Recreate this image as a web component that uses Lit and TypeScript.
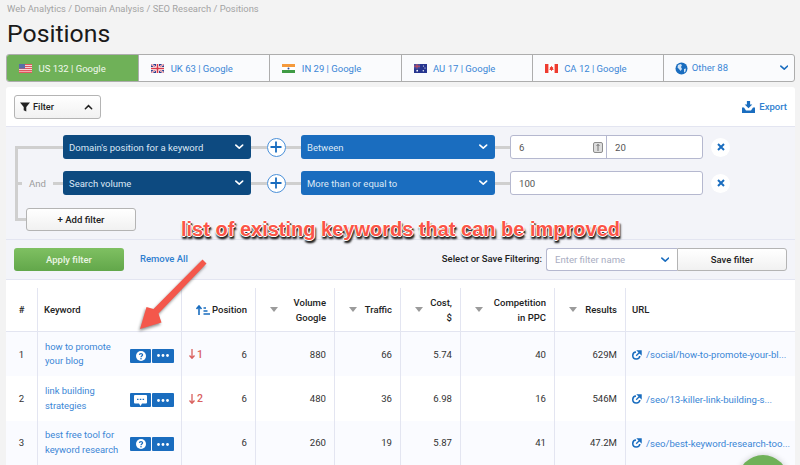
import { LitElement, html, css, svg } from "lit";
import { customElement } from "lit/decorators.js";

const chevron = (c = "#fff") => html`<svg class="chev" width="8.5" height="5.5" viewBox="0 0 10 6"><path d="M1 1l4 3.6L9 1" fill="none" stroke=${c} stroke-width="1.9" stroke-linecap="round" stroke-linejoin="round"/></svg>`;

const flags: Record<string, any> = {
  us: svg`<rect width="13" height="9" fill="#fff"/><path d="M0 .7h13M0 2.7h13M0 4.7h13M0 6.7h13M0 8.4h13" stroke="#e0575f" stroke-width="1.2"/><rect width="6" height="4.6" fill="#5a6ea8"/>`,
  uk: svg`<rect width="13" height="9" fill="#2f3f8f"/><path d="M0 0l13 9M13 0L0 9" stroke="#fff" stroke-width="1.8"/><path d="M0 0l13 9M13 0L0 9" stroke="#d8394a" stroke-width=".7"/><path d="M6.5 0v9M0 4.5h13" stroke="#fff" stroke-width="3"/><path d="M6.5 0v9M0 4.5h13" stroke="#d8394a" stroke-width="1.6"/>`,
  in: svg`<rect width="13" height="3" fill="#f59a3c"/><rect y="3" width="13" height="3" fill="#fff"/><rect y="6" width="13" height="3" fill="#3f9b45"/><circle cx="6.5" cy="4.5" r="1" fill="#2d4a9a"/>`,
  au: svg`<rect width="13" height="9" fill="#26358f"/><rect width="6" height="4.5" fill="#46509f"/><path d="M0 2.2h6M3 0v4.5" stroke="#d84a55" stroke-width=".9"/><circle cx="9.5" cy="2" r=".6" fill="#fff"/><circle cx="11" cy="4" r=".6" fill="#fff"/><circle cx="9.3" cy="6.8" r=".7" fill="#fff"/><circle cx="3.2" cy="6.7" r=".9" fill="#fff"/>`,
  ca: svg`<rect width="13" height="9" fill="#fff"/><rect width="3.4" height="9" fill="#ee3b2f"/><rect x="9.6" width="3.4" height="9" fill="#ee3b2f"/><path d="M6.5 1.8l.8 1.5.9-.4-.3 2 .8-.1-.2 1-1.6.2v1h-.8v-1l-1.6-.2-.2-1 .8.1-.3-2 .9.4z" fill="#ee3b2f"/>`,
};

const tabs = [
  ["us", "US 132 | Google"],
  ["uk", "UK 63 | Google"],
  ["in", "IN 29 | Google"],
  ["au", "AU 17 | Google"],
  ["ca", "CA 12 | Google"],
];

const rows = [
  { n: 1, k: ["how to promote", "your blog"], ic: "q", ch: "1", pos: 6, vol: 880, tr: 66, cost: "5.74", comp: 40, res: "629M", url: "/social/how-to-promote-your-bl..." },
  { n: 2, k: ["link building", "strategies"], ic: "c", ch: "2", pos: 6, vol: 480, tr: 36, cost: "6.98", comp: 16, res: "546M", url: "/seo/13-killer-link-building-s..." },
  { n: 3, k: ["best free tool for", "keyword research"], ic: "q", ch: "", pos: 6, vol: 260, tr: 19, cost: "5.87", comp: 41, res: "47.2M", url: "/seo/best-keyword-research-too..." },
];

const plus = html`<span class="plus"><svg width="12" height="12" viewBox="0 0 12 12"><path d="M6 .5v11M.5 6h11" stroke="#1a6dbf" stroke-width="1.8"/></svg></span>`;
const close = html`<span class="close"><svg width="8" height="8" viewBox="0 0 8 8"><path d="M1 1l6 6M7 1L1 7" stroke="#1a6dbf" stroke-width="2"/></svg></span>`;
const tri = html`<i class="tri"></i>`;
const ext = html`<svg class="ext" width="10" height="10" viewBox="0 0 11 11"><path d="M8.6 6.6A3.9 3.9 0 1 1 4.4 2.2" fill="none" stroke="#1a6dbf" stroke-width="1.7"/><path d="M4.6 6.4L9 2M6.4 1h3.6v3.6z" stroke="#1a6dbf" stroke-width="1.4" fill="#1a6dbf"/></svg>`;

@customElement("app-root")
export class AppRoot extends LitElement {
  static styles = css`
    :host { display: block; position: relative; width: 800px; height: 465px; overflow: hidden; background: #f3f3f3; font-family: Roboto, "Liberation Sans", sans-serif; color: #222; font-size: 9.5px; }
    svg { display: block; flex: none; }
    .crumb { font-size: 9.4px; line-height: 12px; color: #a3a3a3; padding: 3px 0 0 7px; height: 15px; box-sizing: border-box; }
    h1 { margin: 0; padding-left: 7px; font-size: 24.8px; font-weight: 400; line-height: 37px; height: 39px; color: #1a1a1a; }
    .tabs { margin: 0 5px 0 6px; height: 28px; display: grid; grid-template-columns: repeat(6, 1fr); border: 1px solid #adadad; border-radius: 3px; box-sizing: border-box; background: #fafbfd; }
    .tab { display: flex; align-items: center; gap: 6.5px; padding-left: 12px; color: #3a86d6; font-size: 9.5px; border-left: 1px solid #adadad; }
    .tab:first-child { border-left: 0; background: #6fb158; color: #f2f8ef; border-radius: 2px 0 0 2px; }
    .tab.other { gap: 4px; padding: 0 6px 0 11px; justify-content: flex-start; }
    .tab.other span { flex: 1; padding-bottom: 2px; }
    .card { margin: 5px 5px 0 6px; background: #fff; border-radius: 3px 3px 0 0; }
    .top { height: 40px; box-sizing: border-box; display: flex; align-items: center; justify-content: space-between; padding: 0 8px; border-bottom: 1px solid #e3e5f1; }
    .fbtn { width: 87px; height: 24px; box-sizing: border-box; border: 1px solid #b4b4b4; border-radius: 3px; background: linear-gradient(#fff, #f1f1f1); display: flex; align-items: center; padding: 0 7px 0 5px; gap: 3px; font-weight: 500; font-size: 9.2px; }
    .fbtn span { flex: 1; }
    .export { display: flex; align-items: center; gap: 4px; color: #2f7fd0; font-weight: 500; }
    .filters { background: #f3f4f9 linear-gradient(#cfcfcf, #cfcfcf) no-repeat 9px 19px / 3px 74px; height: 113px; box-sizing: border-box; padding: 8px 0 0 9px; border-bottom: 1px solid #e3e5f1; }
    .row { display: flex; align-items: center; height: 24px; margin-bottom: 12px; }
    .lead { width: 48px; height: 24px; flex: none; display: flex; align-items: center; padding-left: 7px; box-sizing: border-box; background: linear-gradient(#cfcfcf, #cfcfcf) no-repeat 0 center / 100% 3px; color: #9d9d9d; font-size: 9.6px; }
    .lead span { background: #f3f4f9; padding: 0 7px; }
    .sel { height: 24px; box-sizing: border-box; display: flex; align-items: center; justify-content: space-between; padding: 0 7px 0 6px; color: #dce8f5; border-radius: 3px; font-size: 9.5px; flex: none; }
    .sel.a { width: 187.5px; background: #0d4a80; }
    .sel.b { width: 193.5px; background: #1a6dbf; }
    .lnk { height: 3px; background: #cfcfcf; flex: none; }
    .l1 { width: 16px; }
    .l2 { width: 15.5px; }
    .plus { width: 19px; height: 19px; flex: none; box-sizing: border-box; border: 1.2px solid #4a90d9; border-radius: 50%; background: #fff; display: flex; align-items: center; justify-content: center; }
    .inp { width: 193px; height: 24px; flex: none; box-sizing: border-box; border: 1px solid #b5b8cf; border-radius: 3px; background: #fff; display: flex; align-items: center; color: #555; font-size: 9.6px; }
    .inp > div { padding-left: 8px; height: 100%; display: flex; align-items: center; box-sizing: border-box; }
    .inp .lo { width: 96px; border-right: 1px solid #b5b8cf; justify-content: space-between; padding-right: 3px; }
    .inp .hi { flex: 1; }
    .close { width: 19px; height: 19px; margin-left: 8px; flex: none; background: #fff; border-radius: 50%; display: flex; align-items: center; justify-content: center; }
    .add { width: 110px; height: 23px; margin-top: 1px; box-sizing: border-box; border: 1px solid #b4b4b4; border-radius: 3px; background: linear-gradient(#fff, #f1f1f1); display: flex; align-items: center; justify-content: center; font-weight: 500; font-size: 9.6px; color: #222; }
    .lead.s { width: 11px; padding: 0; }
    .actions { height: 40px; box-sizing: border-box; background: #f3f4f9; display: flex; padding: 8px 8px 0 8px; border-bottom: 1px solid #e3e5f1; align-items: flex-start; }
    .apply { width: 110px; height: 23px; border-radius: 3px; background: linear-gradient(#7fc062, #62a74a); color: #e9f5e3; display: flex; align-items: center; justify-content: center; font-weight: 500; }
    .rm { color: #2f7fd0; font-weight: 500; margin-left: 16px; line-height: 21px; flex: 1; }
    .sv { font-weight: 500; line-height: 21px; margin-right: 4px; }
    .fname { width: 131px; height: 23px; box-sizing: border-box; border: 1px solid #b5b8cf; border-right: 0; border-radius: 3px 0 0 3px; background: #fff; display: flex; align-items: center; justify-content: space-between; padding: 0 8px; color: #a9adc2; font-size: 9.6px; }
    .save { width: 110px; height: 23px; box-sizing: border-box; border: 1px solid #b4b4b4; border-radius: 0 3px 3px 0; background: linear-gradient(#fff, #f1f1f1); display: flex; align-items: center; justify-content: center; font-weight: 500; }
    .grid { display: grid; grid-template-columns: 31px 144px 74px 79px 66px 60px 94px 71px 170px; }
    .th { height: 52px; box-sizing: border-box; border-bottom: 1px solid #e3e5f1; display: flex; align-items: center; font-weight: 500; padding: 8px 8px 0 15px; background: linear-gradient(#e3e5f1, #e3e5f1) no-repeat 0 8px / 1px 100%; justify-content: space-between; line-height: 15px; text-align: right; }
    .th:first-child { background: none; justify-content: center; padding: 8px 0 0; }
    .th.l { justify-content: flex-start; padding-left: 7px; }
    .tri { width: 0; height: 0; border: 4px solid transparent; border-top: 5px solid #9b9b9b; border-bottom: 0; flex: none; }
    .td { height: 44.4px; box-sizing: border-box; display: flex; align-items: center; justify-content: flex-end; padding: 0 8px; border-left: 1px solid #e3e5f1; color: #333; font-size: 9.6px; }
    .td:nth-child(9n+1) { border-left: 0; justify-content: center; padding: 0; }
    .odd { background: #fafbff; }
    .td.kw { justify-content: space-between; padding: 0 7px; color: #3a86d6; line-height: 14.6px; font-size: 9.4px; }
    .td.pos { justify-content: space-between; padding: 0 8px 0 7px; }
    .td.url { justify-content: flex-start; padding: 1px 0 0 6px; gap: 4px; color: #3a86d6; white-space: nowrap; }
    .chg { color: #d9605e; display: flex; align-items: center; gap: 2px; font-weight: 500; font-size: 10.5px; }
    .acts { display: flex; gap: 1px; flex: none; margin-top: 3px; }
    .acts b { height: 14px; background: #1a6dbf; display: flex; align-items: center; justify-content: center; border-radius: 1px; }
    .acts b:first-child { width: 21px; }
    .acts b:last-child { width: 22px; }
    .ann { position: absolute; left: 181px; top: 217px; font: bold 20px "Liberation Sans", Arial, sans-serif; line-height: 24px; color: #fb5447; white-space: nowrap; text-shadow: 1px 0 0 #fff, -1px 0 0 #fff, 0 1px 0 #fff, 0 -1px 0 #fff, 1px 2px 1px #222, 0 3px 2px #333, 2px 3px 2px #444; }
    .arrow { position: absolute; left: 130px; top: 250px; filter: drop-shadow(-1px 2px 1.5px rgba(0,0,0,.45)); }
    .fab { position: absolute; left: 738px; top: 455px; width: 50px; height: 50px; border-radius: 50%; background: #6fb158; box-shadow: 0 0 6px rgba(0,0,0,.2); }
  `;

  render() {
    return html`
      <div class="crumb">Web Analytics / Domain Analysis / SEO Research / Positions</div>
      <h1>Positions</h1>
      <div class="tabs">
        ${tabs.map(([f, t]) => html`<div class="tab"><svg width="13" height="9" viewBox="0 0 13 9">${flags[f]}</svg><span>${t}</span></div>`)}
        <div class="tab other">
          <svg width="13" height="13" viewBox="0 0 13 13"><circle cx="6.5" cy="6.5" r="6" fill="#1a6dbf"/><path d="M3 3l2.5-1 1.5 1-1 2 1 2-1.500 2L4 7 2.500 5.500zM9 7l2-.5-.5 3L9 10.500z" fill="#cfe2f5"/></svg>
          <span>Other 88</span>
          ${chevron("#1a6dbf")}
        </div>
      </div>
      <div class="card">
        <div class="top">
          <div class="fbtn">
            <svg width="10" height="10" viewBox="0 0 10 10"><path d="M0 .5h10L6.300 5v4.500l-2.600-1.300V5z" fill="#222"/></svg>
            <span>Filter</span>
            <svg width="9" height="6" viewBox="0 0 10 6"><path d="M1.500 5L5 1.500 8.500 5" fill="none" stroke="#222" stroke-width="1.700" stroke-linecap="round"/></svg>
          </div>
          <div class="export">
            <svg width="13" height="12" viewBox="0 0 13 12"><path d="M4.900 0h3.200v3.500h2.200L6.500 7.300 2.700 3.500h2.200z" fill="#1a6dbf"/><path d="M0 6.500h2l2 3h5l2-3h2V12H0z" fill="#1a6dbf"/></svg>
            <span>Export</span>
          </div>
        </div>
        <div class="filters">
          <div class="row">
            <div class="lead"></div>
            <div class="sel a"><span>Domain's position for a keyword</span>${chevron()}</div>
            <div class="lnk l1"></div>${plus}<div class="lnk l2"></div>
            <div class="sel b"><span>Between</span>${chevron()}</div>
            <div class="lnk l2"></div>
            <div class="inp">
              <div class="lo"><span>6</span>
                <svg width="10" height="11" viewBox="0 0 10 11"><rect x=".5" y=".5" width="9" height="10" rx="1.500" fill="#ddd" stroke="#8c8c8c"/><path d="M5 2v7M3.500 4L5 2.500 6.500 4" fill="none" stroke="#777"/></svg>
              </div>
              <div class="hi">20</div>
            </div>
            ${close}
          </div>
          <div class="row">
            <div class="lead"><span>And</span></div>
            <div class="sel a"><span>Search volume</span>${chevron()}</div>
            <div class="lnk l1"></div>${plus}<div class="lnk l2"></div>
            <div class="sel b"><span>More than or equal to</span>${chevron()}</div>
            <div class="lnk l2"></div>
            <div class="inp"><div class="hi">100</div></div>
            ${close}
          </div>
          <div class="row">
            <div class="lead s"></div>
            <div class="add">+ Add filter</div>
          </div>
        </div>
        <div class="actions">
          <div class="apply">Apply filter</div>
          <div class="rm">Remove All</div>
          <div class="sv">Select or Save Filtering:</div>
          <div class="fname"><span>Enter filter name</span>${chevron("#1a6dbf")}</div>
          <div class="save">Save filter</div>
        </div>
        <div class="grid">
          <div class="th">#</div>
          <div class="th l">Keyword</div>
          <div class="th">
            <svg width="14" height="10" viewBox="0 0 14 10"><path d="M3 10V2M.5 4L3 1l2.500 3" fill="none" stroke="#1a6dbf" stroke-width="1.600"/><path d="M7.500 3H10M7.500 6h4M7.500 9H14" stroke="#1a6dbf" stroke-width="1.400"/></svg>
            <span>Position</span>
          </div>
          <div class="th">${tri}<span>Volume<br />Google</span></div>
          <div class="th">${tri}<span>Traffic</span></div>
          <div class="th">${tri}<span>Cost,<br />$</span></div>
          <div class="th">${tri}<span>Competition<br />in PPC</span></div>
          <div class="th">${tri}<span>Results</span></div>
          <div class="th l">URL</div>
          ${rows.map((r) => {
            const o = r.n % 2 ? "odd" : "";
            return html`
              <div class="td ${o}">${r.n}</div>
              <div class="td kw ${o}">
                <span>${r.k[0]}<br />${r.k[1]}</span>
                <div class="acts">
                  <b>${r.ic === "q"
                    ? html`<svg width="10" height="10" viewBox="0 0 10 10"><circle cx="5" cy="5" r="5" fill="#fff"/><path d="M3.400 3.900C3.500 2 6.700 2.200 6.600 3.900 6.500 5 5 5 5 6.200" fill="none" stroke="#1a6dbf" stroke-width="1.200"/><circle cx="5" cy="7.700" r=".8" fill="#1a6dbf"/></svg>`
                    : html`<svg width="13" height="11" viewBox="0 0 13 11"><path d="M1 0h11a1 1 0 0 1 1 1v6.500a1 1 0 0 1-1 1H8L6.500 11 5 8.500H1a1 1 0 0 1-1-1V1a1 1 0 0 1 1-1z" fill="#fff"/><path d="M3 4.300h1.500M5.800 4.300h1.500M8.600 4.300h1.500" stroke="#1a6dbf" stroke-width="1.300"/></svg>`}</b>
                  <b><svg width="12" height="3" viewBox="0 0 12 3"><circle cx="1.500" cy="1.500" r="1.400" fill="#fff"/><circle cx="6" cy="1.500" r="1.400" fill="#fff"/><circle cx="10.500" cy="1.500" r="1.400" fill="#fff"/></svg></b>
                </div>
              </div>
              <div class="td pos ${o}">
                <span class="chg">${r.ch
                  ? html`<svg width="6" height="10" viewBox="0 0 6 10"><path d="M3 0v9M.5 6.500L3 9.300l2.500-2.800" fill="none" stroke="#d9605e" stroke-width="1.300"/></svg>${r.ch}`
                  : ""}</span>
                <span>${r.pos}</span>
              </div>
              <div class="td ${o}">${r.vol}</div>
              <div class="td ${o}">${r.tr}</div>
              <div class="td ${o}">${r.cost}</div>
              <div class="td ${o}">${r.comp}</div>
              <div class="td ${o}">${r.res}</div>
              <div class="td url ${o}">${ext}<span>${r.url}</span></div>
            `;
          })}
        </div>
      </div>
      <div class="ann">list of existing keywords that can be improved</div>
      <svg class="arrow" width="85" height="90" viewBox="0 0 85 90"><path d="M72.500 9.500L76.500 13.500 28.500 63.500 31.500 72.500 10 79 16.500 57 23.500 59z" fill="#f4574b"/></svg>
      <div class="fab"></div>
    `;
  }
}
